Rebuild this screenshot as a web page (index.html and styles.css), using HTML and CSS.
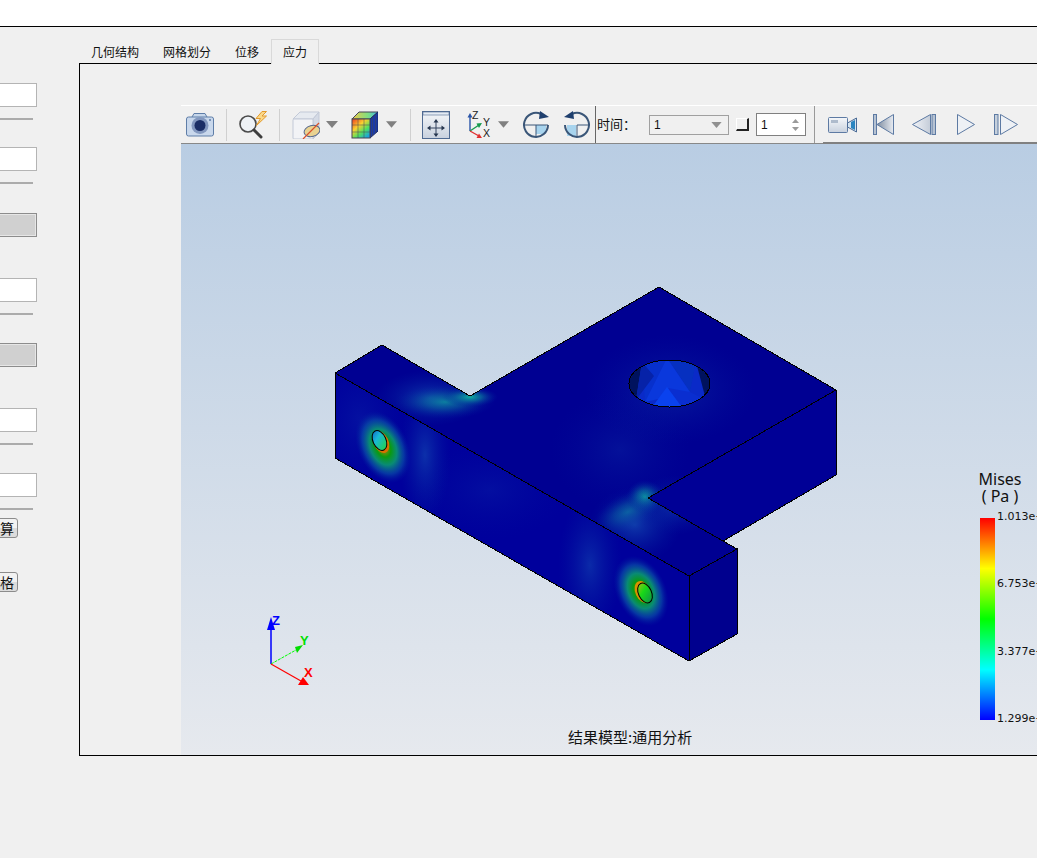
FILE: index.html
```html
<!DOCTYPE html>
<html lang="zh">
<head>
<meta charset="utf-8">
<title>应力</title>
<link rel="stylesheet" href="styles.css">
</head>
<body>
<header class="topbar"></header>
<main class="main">
  <aside class="panel">
    <input class="field" type="text">
    <div class="rule"></div>
    <input class="field mt-27" type="text">
    <div class="rule"></div>
    <div class="gray-btn mt-29"></div>
    <input class="field mt-41" type="text">
    <div class="rule"></div>
    <div class="gray-btn mt-28"></div>
    <input class="field mt-41" type="text">
    <div class="rule"></div>
    <input class="field mt-28" type="text">
    <div class="rule"></div>
    <button class="small-btn mt-8">计算</button>
    <button class="small-btn mt-34">生成网格</button>
  </aside>
  <section class="tabs">
    <nav class="tabbar">
      <span class="tab">几何结构</span>
      <span class="tab">网格划分</span>
      <span class="tab">位移</span>
      <span class="tab active">应力</span>
    </nav>
    <div class="pane">
      <div class="viewer">
        <div class="toolbar">
          <svg class="ic ml-5" width="28" height="28" viewBox="0 0 28 28">
            <path d="M6 6L8 2.5H19L21 6" fill="#c6d6ea" stroke="#5f7ea8"/>
            <rect x=".5" y="6" width="27" height="19" rx="2" fill="#c9d8ec" stroke="#5f7ea8"/>
            <circle cx="14" cy="14.5" r="8.5" fill="#8398bf"/>
            <circle cx="14" cy="14.5" r="5.5" fill="#1b2e66"/>
            <circle cx="24" cy="9" r="1" fill="#5f7ea8"/>
          </svg>
          <span class="sep ml-12"></span>
          <svg class="ic ml-12" width="29" height="28" viewBox="0 0 29 28">
            <circle cx="9" cy="13" r="8" fill="#eef2f6" stroke="#4a4a4a" stroke-width="1.6"/>
            <path d="M15 19L22 26" stroke="#3d3d3d" stroke-width="3" stroke-linecap="round"/>
            <path d="M23 .5L17 7.500H21.500L17.500 14.500L27.500 5H23L27.500 .5Z" fill="#fbd98a" stroke="#e39a2c"/>
          </svg>
          <span class="sep ml-11"></span>
          <svg class="ic ml-12" width="28" height="28" viewBox="0 0 28 28">
            <path d="M1 8L8 1H27L21 8Z" fill="#e6eaf0" stroke="#c2c9d7"/>
            <path d="M21 8L27 1V22L21 28Z" fill="#d4dae5" stroke="#c2c9d7"/>
            <rect x="1" y="8" width="20" height="20" rx="1" fill="#f2f3f6" stroke="#c2c9d7"/>
            <ellipse cx="20" cy="20" rx="8" ry="5.5" transform="rotate(-15 20 20)" fill="#e9d291" stroke="#56688c"/>
            <path d="M11 28L27 12" stroke="#d8502a" stroke-width="1.2"/>
          </svg>
          <svg class="ic ml-6" width="12" height="7" viewBox="0 0 12 7"><path d="M0 0H12L6 7Z" fill="#808080"/></svg>
          <svg class="ic ml-13" width="27" height="28" viewBox="0 0 27 28">
            <path d="M1 8L8 1H27L19 8Z" fill="url(#cubeTop)" stroke="#445"/>
            <path d="M19 8L27 1V20L19 27Z" fill="#1b3aa6" stroke="#1a2a66"/>
            <rect x="1" y="8" width="18" height="19" fill="url(#cubeFront)" stroke="#445"/>
            <path d="M7 8V27M13 8V27M1 14H19M1 21H19M21.500 6V25M24.500 3.500V22" stroke="#445" stroke-width=".5" fill="none"/>
          </svg>
          <svg class="ic ml-8" width="11" height="7" viewBox="0 0 12 7"><path d="M0 0H12L6 7Z" fill="#808080"/></svg>
          <span class="sep ml-13"></span>
          <svg class="ic ml-11" width="28" height="28" viewBox="0 0 28 28">
            <rect x=".5" y=".5" width="27" height="27" fill="url(#soft)" stroke="#4f6a92"/>
            <rect x="1" y="1" width="26" height="3" fill="#e4ebf4" stroke="#4f6a92" stroke-width=".6"/>
            <path d="M14 11V23M8 17H20" stroke="#33435e"/>
            <path d="M14 8L11.500 11.500H16.500ZM14 26L11.500 22.500H16.500ZM5 17L8.500 14.500V19.500ZM23 17L19.500 14.500V19.500Z" fill="#26364f"/>
          </svg>
          <svg class="ic ml-16" width="26" height="28" viewBox="0 0 26 28">
            <path d="M4 20V5" stroke="#2a55a8" stroke-width="1.4"/>
            <path d="M4 2L1.500 6.500H6.500Z" fill="#2a55a8"/>
            <path d="M4 20L13 14" stroke="#159a4c" stroke-width="1.4"/>
            <path d="M16 12L10.500 12.500L13 17Z" fill="#159a4c"/>
            <path d="M4 20L13 25" stroke="#e03030" stroke-width="1.4"/>
            <path d="M16 27L10.500 27L13 22.500Z" fill="#e03030"/>
            <text class="axis-mini" x="6" y="8">Z</text>
            <text class="axis-mini" x="17" y="15">Y</text>
            <text class="axis-mini" x="17" y="26">X</text>
          </svg>
          <svg class="ic ml-6" width="11" height="7" viewBox="0 0 12 7"><path d="M0 0H12L6 7Z" fill="#808080"/></svg>
          <svg class="ic ml-13" width="28" height="28" viewBox="0 0 28 28">
            <rect x="14" y="14" width="10" height="9" fill="#a8d4ee"/>
            <path d="M19 3A12 12 0 1 0 26 14" fill="none" stroke="#3a5678" stroke-width="2"/>
            <path d="M1.500 14H26M14 14V26" stroke="#3a5678" fill="none"/>
            <path d="M18 0L27 6L17 8Z" fill="#1f3f6e"/>
          </svg>
          <svg class="ic ml-13" width="28" height="28" viewBox="0 0 28 28">
            <g transform="translate(28 0) scale(-1 1)">
              <rect x="15" y="14" width="9" height="11" fill="#a8d4ee"/>
              <path d="M19 3A12 12 0 1 0 26 14" fill="none" stroke="#3a5678" stroke-width="2"/>
              <path d="M14 14H2M14 14V26" stroke="#3a5678" fill="none"/>
              <path d="M18 0L27 6L17 8Z" fill="#1f3f6e"/>
            </g>
          </svg>
          <span class="sep dark ml-4"></span>
          <span class="tb-label ml-1">时间：</span>
          <div class="combo ml-13"><span>1</span><svg width="11" height="6" viewBox="0 0 12 7"><path d="M0 0H12L6 7Z" fill="#909090"/></svg></div>
          <span class="check ml-7"></span>
          <div class="spin ml-7"><span>1</span>
            <svg width="9" height="14" viewBox="0 0 9 14"><path d="M4.500 1L8 5H1ZM4.500 13L8 9H1Z" fill="#9a9a9a"/></svg>
          </div>
          <span class="sep end ml-8"></span>
          <div class="player ml-8">
            <svg class="ic ml-5" width="30" height="28" viewBox="0 0 30 28">
              <rect x=".5" y="7.500" width="19" height="15" rx="1" fill="url(#soft)" stroke="#5d7aa3"/>
              <rect x="3" y="10" width="7" height="3" fill="#aebbcc"/>
              <path d="M19.500 13L28.500 8V22L19.500 17Z" fill="#d6e4f0" stroke="#4a6a95"/>
              <path d="M23 12L27 10V20L23 18Z" fill="#2a85c0"/>
            </svg>
            <svg class="ic ml-14" width="22" height="28" viewBox="0 0 22 28">
              <rect x="1.500" y="4.500" width="3" height="20" fill="#b6c2d2" stroke="#5d7aa3"/>
              <path d="M21.500 4.500L5 14.500L21.500 24.500Z" fill="url(#media)" stroke="#5d7aa3"/>
            </svg>
            <svg class="ic ml-18" width="24" height="28" viewBox="0 0 24 28">
              <path d="M.5 14.500L18.500 4.500V24.500Z" fill="url(#mediaR)" stroke="#5d7aa3"/>
              <rect x="20" y="4.500" width="3.500" height="20" fill="#b6c2d2" stroke="#5d7aa3"/>
            </svg>
            <svg class="ic ml-21" width="18" height="28" viewBox="0 0 18 28">
              <path d="M.5 4.500L17.500 14.500L.5 24.500Z" fill="#eef1f5" stroke="#5d7aa3"/>
            </svg>
            <svg class="ic ml-19" width="24" height="28" viewBox="0 0 24 28">
              <rect x=".5" y="4.500" width="3.500" height="20" fill="#c6d0dc" stroke="#5d7aa3"/>
              <path d="M6.500 4.500L23.500 14.500L6.500 24.500Z" fill="#eef1f5" stroke="#5d7aa3"/>
            </svg>
          </div>
        </div>
        <div class="canvas">
          <svg class="scene" width="856" height="611" viewBox="181 144 856 611">
            <defs>
              <linearGradient id="soft" x1="0" y1="0" x2="0" y2="1"><stop offset="0" stop-color="#f5f7fa"/><stop offset="1" stop-color="#c8d1de"/></linearGradient>
              <linearGradient id="media" x1="0" y1="0" x2="1" y2="0"><stop offset="0" stop-color="#7f8da0"/><stop offset="1" stop-color="#e8ecf2"/></linearGradient>
              <linearGradient id="mediaR" x1="0" y1="0" x2="1" y2="0"><stop offset="0" stop-color="#f2f4f8"/><stop offset="1" stop-color="#c4ccd8"/></linearGradient>
              <linearGradient id="cubeFront" x1="0" y1="0" x2=".8" y2="1"><stop offset="0" stop-color="#ee3a20"/><stop offset=".4" stop-color="#fbd030"/><stop offset=".7" stop-color="#50e060"/><stop offset="1" stop-color="#18a0e0"/></linearGradient>
              <linearGradient id="cubeTop" x1="0" y1="0" x2="1" y2="0"><stop offset="0" stop-color="#f0c848"/><stop offset=".6" stop-color="#80e080"/><stop offset="1" stop-color="#40b8e8"/></linearGradient>
              <radialGradient id="teal"><stop offset="0" stop-color="#10b8a0" stop-opacity=".95"/><stop offset=".4" stop-color="#0a7a9e" stop-opacity=".7"/><stop offset="1" stop-color="#0020a0" stop-opacity="0"/></radialGradient>
              <radialGradient id="glow"><stop offset="0" stop-color="#1450b4" stop-opacity=".7"/><stop offset="1" stop-color="#0020a0" stop-opacity="0"/></radialGradient>
              <radialGradient id="halo"><stop offset="0" stop-color="#e08000"/><stop offset=".28" stop-color="#0a9a10"/><stop offset=".5" stop-color="#0a9a70" stop-opacity=".9"/><stop offset=".75" stop-color="#0a5aa8" stop-opacity=".6"/><stop offset="1" stop-color="#0020a0" stop-opacity="0"/></radialGradient>
              <linearGradient id="holeL" x1="0" y1="0" x2=".4" y2="1"><stop offset="0" stop-color="#1060c8"/><stop offset=".45" stop-color="#18b8d8"/><stop offset="1" stop-color="#20d060"/></linearGradient>
              <linearGradient id="holeR" x1="0" y1="0" x2=".4" y2="1"><stop offset="0" stop-color="#b0c010"/><stop offset=".5" stop-color="#18d818"/><stop offset="1" stop-color="#10a040"/></linearGradient>
              <clipPath id="topFace"><polygon points="335,373 382,345 470,396 659,287 836,390 648,498 737,549 689,576"/></clipPath>
              <clipPath id="frontFace"><polygon points="335,373 689,576 689,661 335,458"/></clipPath>
              <clipPath id="topHole"><ellipse cx="669.500" cy="383.500" rx="40.500" ry="23.500"/></clipPath>
            </defs>

            <polygon points="648,498 836,390 836,475 723,541" fill="#000096"/>
            <polygon points="689,576 737,549 737,634 689,661" fill="#00008e"/>

            <polygon points="335,373 382,345 470,396 659,287 836,390 648,498 737,549 689,576" fill="#000092"/>
            <g clip-path="url(#topFace)">
              <ellipse cx="670" cy="390" rx="85" ry="55" fill="url(#glow)" opacity=".5"/>
              <ellipse cx="620" cy="450" rx="70" ry="60" fill="url(#glow)" opacity=".3"/>
              <ellipse cx="430" cy="398" rx="55" ry="28" fill="url(#glow)"/>
              <ellipse cx="445" cy="402" rx="50" ry="17" fill="url(#teal)" opacity=".65"/>
              <ellipse cx="470" cy="397" rx="28" ry="10" fill="url(#teal)"/>
              <ellipse cx="628" cy="512" rx="36" ry="19" transform="rotate(-25 628 512)" fill="url(#teal)" opacity=".7"/>
              <ellipse cx="645" cy="497" rx="19" ry="17" fill="url(#teal)"/>
              <ellipse cx="635" cy="525" rx="46" ry="38" fill="url(#glow)"/>
              <ellipse cx="675" cy="505" rx="42" ry="30" fill="url(#glow)" opacity=".8"/>
            </g>

            <polygon points="335,373 689,576 689,661 335,458" fill="#00009c"/>
            <g clip-path="url(#frontFace)">
              <ellipse cx="360" cy="420" rx="50" ry="70" fill="url(#glow)" opacity=".3"/>
              <ellipse cx="425" cy="455" rx="26" ry="70" fill="url(#glow)" opacity=".85"/>
              <ellipse cx="590" cy="565" rx="32" ry="70" fill="url(#glow)" opacity=".75"/>
              <ellipse cx="490" cy="490" rx="80" ry="50" fill="url(#glow)" opacity=".25"/>
              <ellipse cx="383" cy="447" rx="25" ry="38" transform="rotate(-25 383 447)" fill="url(#halo)"/>
              <ellipse cx="641" cy="591" rx="25" ry="37" transform="rotate(-25 641 591)" fill="url(#halo)"/>
            </g>

            <ellipse cx="381" cy="442" rx="7.500" ry="11.500" transform="rotate(-25 381 442)" fill="#d87000"/>
            <ellipse cx="379.500" cy="440.500" rx="6.500" ry="10.500" transform="rotate(-25 379.500 440.500)" fill="url(#holeL)" stroke="#000"/>
            <ellipse cx="643" cy="592" rx="7.500" ry="11.500" transform="rotate(-25 643 592)" fill="#d89000"/>
            <ellipse cx="645" cy="593" rx="6.500" ry="10.500" transform="rotate(-25 645 593)" fill="url(#holeR)" stroke="#000"/>

            <ellipse cx="669.500" cy="383.500" rx="40.500" ry="23.500" fill="#0a2ac8"/>
            <g clip-path="url(#topHole)">
              <polygon points="625,383 642,362 636,400" fill="#00125e"/>
              <polygon points="714,383 696,362 706,400" fill="#00125e"/>
              <polygon points="642,362 667,358 645,402" fill="#0730cc"/>
              <polygon points="667,358 696,362 690,392" fill="#0630c0"/>
              <polygon points="667,358 690,392 645,402" fill="#0a38dc"/>
              <polygon points="690,392 706,400 680,410 668,388" fill="#0a2ed0"/>
              <polygon points="667,387 650,410 684,410" fill="#0a42ee"/>
              <polygon points="636,400 642,362 654,376" fill="#0622a8"/>
            </g>
            <g class="edges">
              <path d="M335 373L382 345L470 396L659 287L836 390V475L723 541"/>
              <path d="M335 373V458L689 661L737 634V549L689 576L335 373"/>
              <path d="M689 576V661M836 390L648 498L737 549"/>
              <ellipse cx="669.500" cy="383.500" rx="40.500" ry="23.500" fill="none"/>
            </g>

            <g class="triad">
              <path d="M271 664V628" stroke="#0000ff" stroke-width="1.500"/>
              <path d="M271 617L267 630H275Z" fill="#0000ff"/>
              <path d="M271 664L296 650" stroke="#00ff00" stroke-width="1" stroke-dasharray="3 1"/>
              <path d="M303 645L295 647L297 653Z" fill="#00dd00"/>
              <path d="M271 664L301 681" stroke="#ff0000" stroke-width="1.200"/>
              <path d="M303 677L298 685H309Z" fill="#ff0000"/>
              <text class="t-z" x="272" y="625">Z</text>
              <text class="t-y" x="300" y="645">Y</text>
              <text class="t-x" x="304" y="677">X</text>
            </g>
          </svg>
          <div class="legend">
            <div class="legend-title">Mises<br>( Pa )</div>
            <div class="legend-body">
              <div class="colorbar"></div>
              <div class="legend-labels">
                <span>1.013e+09</span>
                <span>6.753e+08</span>
                <span>3.377e+08</span>
                <span>1.299e+03</span>
              </div>
            </div>
          </div>
          <div class="caption">结果模型:通用分析</div>
        </div>
      </div>
    </div>
  </section>
</main>
</body>
</html>
```

FILE: styles.css
```css
* { box-sizing: border-box; }
html, body { margin: 0; height: 100%; }
body {
  width: 1037px;
  height: 858px;
  overflow: hidden;
  background: #f0f0f0;
  font-family: "Noto Sans CJK SC", "Noto Sans", sans-serif;
  display: flex;
  flex-direction: column;
}
.topbar { height: 27px; background: #fff; border-bottom: 1px solid #000; flex: none; }
.main { flex: 1; display: flex; min-height: 0; }

/* left panel, clipped by the window edge */
.panel {
  width: 37px;
  flex: none;
  padding-top: 56px;
  display: flex;
  flex-direction: column;
  align-items: flex-end;
}
.field {
  width: 60px;
  height: 24px;
  flex: none;
  padding: 0;
  background: #fff;
  border: 1px solid #b4b4b4;
  border-radius: 0;
}
.rule { width: 56px; height: 2px; margin: 11px 4px 0 0; background: #ababab; flex: none; }
.gray-btn {
  width: 60px;
  height: 24px;
  flex: none;
  background: #d0d0d0;
  border: 1px solid #8c8c8c;
  box-shadow: inset 0 0 0 1px #e6e6e6;
}
.small-btn {
  flex: none;
  height: 20px;
  margin-right: 19px;
  padding: 0 3px 0 0;
  font: 14px/18px "Noto Sans CJK SC", sans-serif;
  color: #111;
  white-space: nowrap;
  background: linear-gradient(#f2f2f2 50%, #dcdcdc 50%);
  border: 1px solid #8c8c8c;
  border-radius: 3px;
  text-align: right;
}
.mt-8 { margin-top: 8px; }
.mt-27 { margin-top: 27px; }
.mt-28 { margin-top: 28px; }
.mt-29 { margin-top: 29px; }
.mt-34 { margin-top: 34px; }
.mt-41 { margin-top: 41px; }

/* tabs */
.tabs { flex: 1; min-width: 0; margin-left: 42px; display: flex; flex-direction: column; height: 729px; }
.tabbar { display: flex; height: 36px; padding-top: 12px; flex: none; position: relative; z-index: 1; }
.tab {
  height: 24px;
  padding: 0 11px;
  font-size: 12px;
  line-height: 24px;
  color: #111;
  border: 1px solid transparent;
  border-bottom: 0;
}
.tab.active { background: #f0f0f0; border-color: #d9d9d9; height: 25px; }
.pane {
  flex: 1;
  min-height: 0;
  border: 1px solid #000;
  border-right: 0;
  padding: 41px 0 0 101px;
  display: flex;
}
.viewer { flex: 1; min-width: 0; display: flex; flex-direction: column; }

/* toolbar */
.toolbar {
  height: 39px;
  flex: none;
  display: flex;
  align-items: center;
  background: #f0f0f0;
  border-top: 1px solid #fff;
  border-bottom: 1px solid #888;
}
.ic { flex: none; display: block; }
.sep { width: 1px; height: 32px; background: #d0d0d0; flex: none; }
.sep.dark { background: #666; height: 37px; }
.sep.end { background: #999; height: 37px; }
.tb-label { width: 39px; padding-bottom: 3px; font-size: 13px; color: #111; flex: none; white-space: nowrap; }
.combo {
  width: 80px;
  height: 20px;
  flex: none;
  padding: 0 6px 0 4px;
  display: flex;
  align-items: center;
  justify-content: space-between;
  border: 1px solid #a0a0a0;
  background: #f0f0f0;
  font: 12px "Liberation Sans", sans-serif;
  color: #111;
}
.check {
  width: 13px;
  height: 13px;
  flex: none;
  background: #f0f0f0;
  border-top: 1px solid #fff;
  border-left: 1px solid #fff;
  border-right: 2px solid #222;
  border-bottom: 2px solid #222;
}
.spin {
  width: 50px;
  height: 23px;
  flex: none;
  padding: 0 5px 0 4px;
  display: flex;
  align-items: center;
  justify-content: space-between;
  background: #fff;
  border: 1px solid #808080;
  font: 12px "Liberation Sans", sans-serif;
  color: #111;
}
.player {
  flex: 1;
  align-self: stretch;
  display: flex;
  align-items: center;
  margin-bottom: -1px;
  border-bottom: 2px solid #808080;
}
.axis-mini { font: 10.5px "Liberation Sans", sans-serif; fill: #222; }
.ml-1 { margin-left: 1px; }
.ml-4 { margin-left: 4px; }
.ml-5 { margin-left: 5px; }
.ml-6 { margin-left: 6px; }
.ml-7 { margin-left: 7px; }
.ml-8 { margin-left: 8px; }
.ml-11 { margin-left: 11px; }
.ml-12 { margin-left: 12px; }
.ml-13 { margin-left: 13px; }
.ml-14 { margin-left: 14px; }
.ml-16 { margin-left: 16px; }
.ml-18 { margin-left: 18px; }
.ml-19 { margin-left: 19px; }
.ml-21 { margin-left: 21px; }

/* 3D canvas */
.canvas {
  flex: 1;
  min-height: 0;
  position: relative;
  overflow: hidden;
  background: linear-gradient(#b9cde3, #e6e9ee);
}
.scene { display: block; }
.edges { fill: none; stroke: #000; stroke-width: 1; shape-rendering: crispEdges; }
.triad text { font: bold 13px "Liberation Sans", sans-serif; }
.t-z { fill: #0000ff; }
.t-y { fill: #00e000; }
.t-x { fill: #ff0000; }
.legend { position: absolute; left: 797px; top: 327px; width: 120px; }
.legend-title {
  width: 44px;
  margin-bottom: 13px;
  text-align: center;
  font: 16px/17px "Noto Sans", sans-serif;
  color: #111;
  white-space: nowrap;
}
.legend-body { display: flex; height: 202px; margin-left: 2px; }
.colorbar {
  width: 15px;
  background: linear-gradient(#ff0000, #ffff00 25%, #00ff00 50%, #00ffff 75%, #0000ff);
}
.legend-labels {
  margin: -9px 0 -7px 2px;
  display: flex;
  flex-direction: column;
  justify-content: space-between;
  font: 11px/16px "DejaVu Sans", sans-serif;
  color: #111;
  white-space: nowrap;
}
.caption {
  position: absolute;
  left: 387px;
  top: 582px;
  font-size: 15px;
  line-height: 22px;
  color: #111;
  white-space: nowrap;
}
```
